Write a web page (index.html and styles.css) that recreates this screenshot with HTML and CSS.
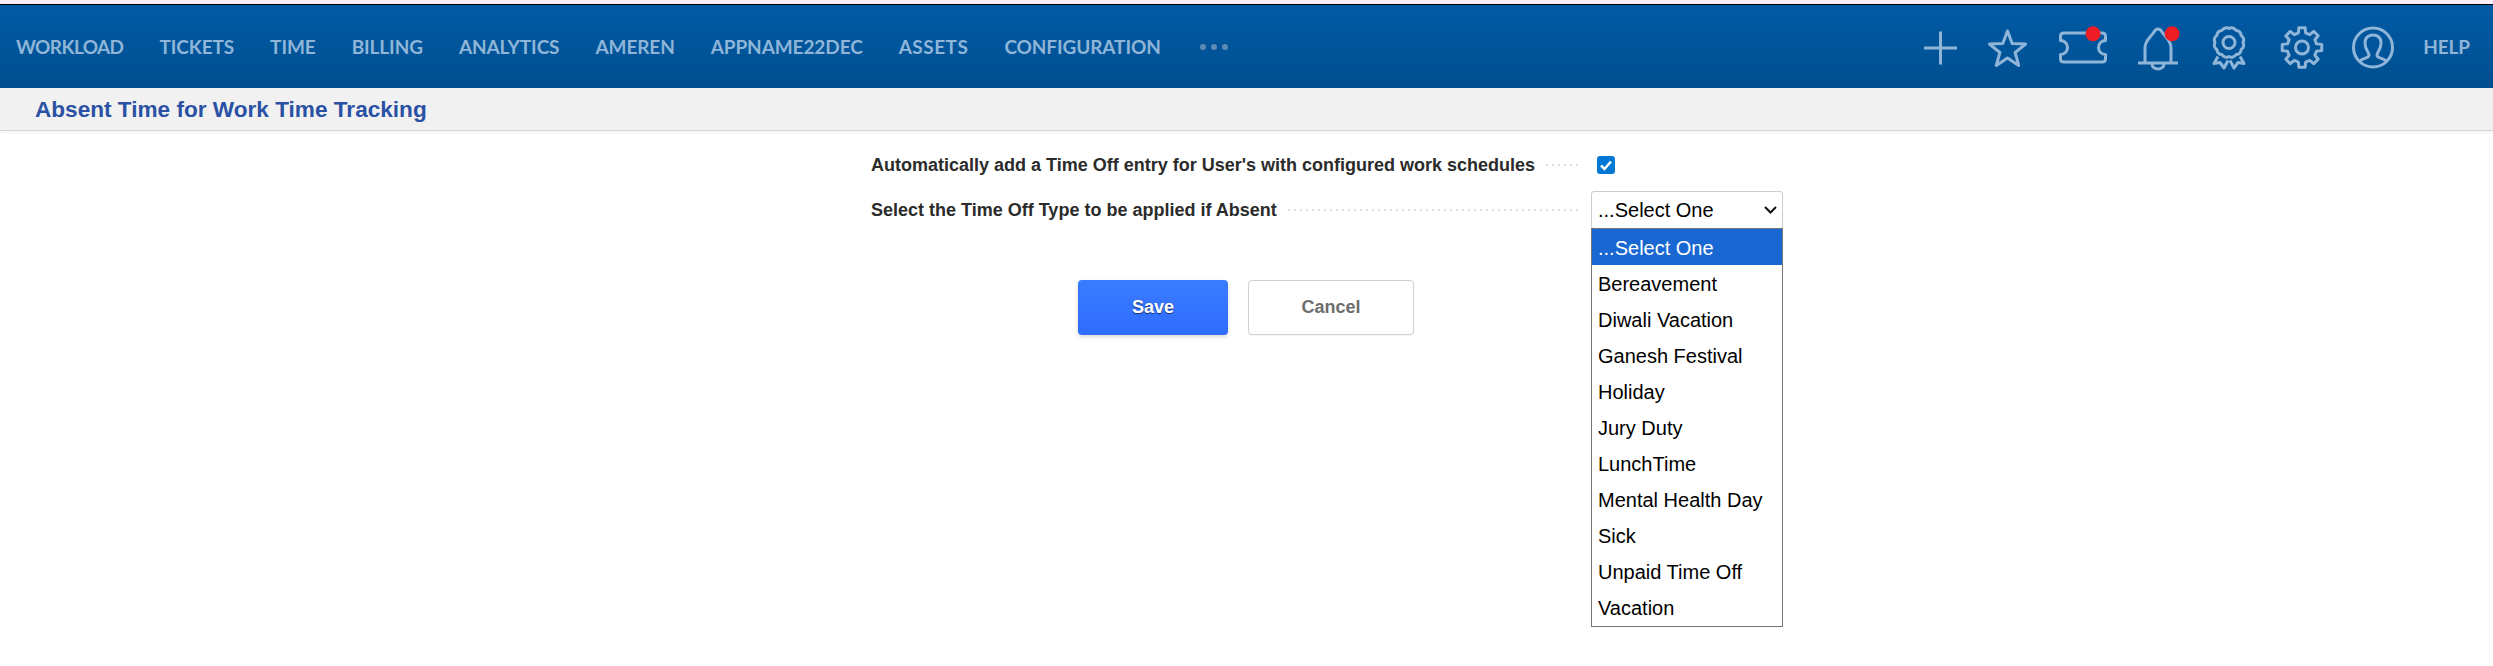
FILE: index.html
```html
<!DOCTYPE html>
<html lang="en">
<head>
  <meta charset="UTF-8" />
  <title>Absent Time for Work Time Tracking</title>
  <link rel="stylesheet" href="styles.css">
</head>
<body>

  <header class="topbar">
    <nav class="main-nav">
      <a href="#" class="nav-tight">WORKLOAD</a>
      <a href="#">TICKETS</a>
      <a href="#">TIME</a>
      <a href="#">BILLING</a>
      <a href="#">ANALYTICS</a>
      <a href="#">AMEREN</a>
      <a href="#">APPNAME22DEC</a>
      <a href="#" class="nav-wide">ASSETS</a>
      <a href="#">CONFIGURATION</a>
      <span class="more-dots"><i></i><i></i><i></i></span>
    </nav>

    <div class="tools">
      <!-- plus -->
      <svg class="icon icon-plus" viewBox="0 0 33 42"><path d="M16.5 5.5V38.5M0 22H33"/></svg>
      <!-- favourites -->
      <svg class="icon icon-star" viewBox="0 0 42 42"><path d="M20.5 5L25.2 17.5 38.6 18.1 28.1 26.5 31.7 39.4 20.5 32 9.3 39.4 12.9 26.5 2.4 18.1 15.8 17.5Z"/></svg>
      <!-- tickets -->
      <svg class="icon icon-ticket" viewBox="0 0 48 42">
        <path d="M5 7H43Q46.500 7 46.500 10V14.500a7 7 0 0 0 0 14V33Q46.500 36 43 36H5Q1.500 36 1.500 33V28.500a7 7 0 0 0 0-14V10Q1.500 7 5 7Z"/>
        <circle class="dot" cx="34" cy="7.800" r="7.500"/>
      </svg>
      <!-- notifications -->
      <svg class="icon icon-bell" viewBox="0 0 42 42">
        <path d="M8 36V22C8 14 13 12 17 6C19 2 23 2 25 6C29 12 34 14 34 22V36M1 37H41M15 38a6 5 0 0 0 12 0"/>
        <circle class="dot" cx="35" cy="7.800" r="7.500"/>
      </svg>
      <!-- awards -->
      <svg class="icon icon-award" viewBox="0 0 42 42">
        <path transform="translate(3 .5)" d="M17 2A5 5 0 0 1 24 3.900A5 5 0 0 1 29.100 9A5 5 0 0 1 31 16A5 5 0 0 1 29.100 23A5 5 0 0 1 24 28.100A5 5 0 0 1 17 30A5 5 0 0 1 10 28.100A5 5 0 0 1 4.900 23A5 5 0 0 1 3 16A5 5 0 0 1 4.900 9A5 5 0 0 1 10 3.900A5 5 0 0 1 17 2Z"/>
        <circle cx="20" cy="16.500" r="6"/>
        <path d="M9 30.500L5 37.500 11 36.500 15 42 19 34.500M21 34.500L25 42 29 36.500 35 37.500 31 30.500"/>
      </svg>
      <!-- settings -->
      <svg class="icon icon-gear" viewBox="0 0 42 42">
        <path transform="translate(21 21.500)" d="M-3.630-14.550L-3.130-19.750 3.130-19.750 3.630-14.550 7.720-12.850 11.750-16.180 16.180-11.750 12.850-7.720 14.550-3.630 19.750-3.130 19.750 3.130 14.550 3.630 12.850 7.720 16.180 11.750 11.750 16.180 7.720 12.850 3.630 14.550 3.130 19.750-3.130 19.750-3.630 14.550-7.720 12.850-11.750 16.180-16.180 11.750-12.850 7.720-14.550 3.630-19.750 3.130-19.750-3.130-14.550-3.630-12.850-7.720-16.180-11.750-11.750-16.180-7.720-12.850Z"/>
        <circle cx="21" cy="21.500" r="6.500"/>
      </svg>
      <!-- profile -->
      <svg class="icon icon-user" viewBox="0 0 42 42">
        <circle cx="20" cy="21.500" r="19.500"/>
        <path d="M6 36C10 31 16 33 16 29C16 26 12 24 12 17C12 11 16 9 20 9C24 9 28 11 28 17C28 24 24 26 24 29C24 33 30 31 34 36"/>
      </svg>
      <a href="#" class="help">HELP</a>
    </div>
  </header>

  <div class="page-title">
    <h1>Absent Time for Work Time Tracking</h1>
  </div>

  <form class="settings-form">
    <div class="form-row">
      <label>Automatically add a Time Off entry for User's with configured work schedules</label>
      <span class="leader"></span>
      <div class="control check-control">
        <span class="checkbox">
          <svg viewBox="0 0 18 18"><path d="M4 9.500L7.500 13 14 5.500"/></svg>
        </span>
      </div>
    </div>
    <div class="form-row">
      <label>Select the Time Off Type to be applied if Absent</label>
      <span class="leader"></span>
      <div class="control">
        <select class="type-select">
          <option>...Select One</option>
        </select>
        <svg class="chevron" viewBox="0 0 13 8"><path d="M1 1L6.500 6.500 12 1"/></svg>
        <!-- open dropdown list -->
        <ul class="type-list">
          <li class="selected">...Select One</li>
          <li>Bereavement</li>
          <li>Diwali Vacation</li>
          <li>Ganesh Festival</li>
          <li>Holiday</li>
          <li>Jury Duty</li>
          <li>LunchTime</li>
          <li>Mental Health Day</li>
          <li>Sick</li>
          <li>Unpaid Time Off</li>
          <li>Vacation</li>
        </ul>
      </div>
    </div>
  </form>

  <div class="buttons">
    <button type="button" class="btn btn-save">Save</button>
    <button type="button" class="btn btn-cancel">Cancel</button>
  </div>

</body>
</html>
```

FILE: styles.css
```css
html, body {
  height: 100%;
}

body {
  margin: 0;
  background-color: #fff;
  font-family: "Liberation Sans", Arial, sans-serif;
  overflow: hidden;
}

.topbar {
  display: flex;
  justify-content: space-between;
  align-items: center;
  height: 83px;
  padding: 0 23px 0 16px;
  background: linear-gradient(#005aa4, #004f90);
  border-top: 1px solid #000;
  box-shadow: 0 -4px 0 #fdeefc;
  margin-top: 4px;
}

.main-nav {
  display: flex;
  align-items: center;
  gap: 36px;
}

.main-nav a,
.help {
  color: #8fb5d8;
  font-family: Lato, sans-serif;
  font-size: 19px;
  font-weight: 700;
  letter-spacing: -0.1px;
  text-decoration: none;
}

.main-nav .nav-tight {
  letter-spacing: -0.6px;
}

.main-nav .nav-wide {
  letter-spacing: 0.5px;
}

.more-dots {
  display: flex;
  gap: 5px;
  margin-left: 3px;
}

.more-dots i {
  width: 6px;
  height: 6px;
  border-radius: 50%;
  background-color: #5e8ab6;
}

.tools {
  display: flex;
  align-items: center;
  gap: 30px;
}

.icon {
  height: 42px;
  overflow: visible;
  fill: none;
  stroke: #8fb5d8;
  stroke-width: 3;
  stroke-linejoin: round;
}

.icon .dot {
  fill: #ee1c25;
  stroke: none;
}

.icon-plus { width: 33px; }
.icon-star { width: 42px; }
.icon-ticket { width: 48px; }
.icon-bell { width: 42px; }
.icon-award { width: 42px; }
.icon-gear { width: 42px; }
.icon-user { width: 42px; }

.help {
  margin-left: -2px;
}

.page-title {
  height: 42px;
  padding-left: 35px;
  background-color: #f1f1f1;
  border-bottom: 1px solid #d5d5d5;
  box-shadow: 0 1px 3px rgba(0,0,0,0.08);
}

h1 {
  margin: 0;
  color: #2b51a5;
  font-size: 22.600px;
  line-height: 43px;
}

.settings-form {
  display: flex;
  flex-direction: column;
  width: 912px;
  margin: 15px 0 0 871px;
  gap: 7px;
}

.form-row {
  display: flex;
  align-items: center;
  height: 38px;
}

.form-row label {
  color: #2b2b2b;
  font-size: 18px;
  font-weight: 700;
}

.leader {
  flex: 1;
  height: 2px;
  margin: 0 11px 0 11px;
  background: repeating-linear-gradient(90deg, #ddd 0 2px, transparent 2px 6px);
}

.control {
  position: relative;
  width: 192px;
  flex: none;
}

.check-control {
  padding-left: 6px;
  box-sizing: border-box;
}

.checkbox {
  display: block;
  width: 18px;
  height: 18px;
  border-radius: 3px;
  background-color: #0078d4;
}

.checkbox svg {
  display: block;
  fill: none;
  stroke: #fff;
  stroke-width: 2.500;
}

.type-select {
  display: block;
  width: 100%;
  height: 38px;
  padding: 0 0 0 6px;
  appearance: none;
  background-color: #fff;
  border: 1px solid #ccc;
  border-radius: 3px;
  color: #000;
  font-family: "Liberation Sans", Arial, sans-serif;
  font-size: 20px;
}

.chevron {
  position: absolute;
  top: 15px;
  right: 6px;
  width: 13px;
  height: 8px;
  fill: none;
  stroke: #111;
  stroke-width: 2;
}

.type-list {
  position: absolute;
  z-index: 1;
  left: 0;
  right: 0;
  top: 37px;
  margin: 0;
  padding: 0 0 1px;
  list-style: none;
  background-color: #fff;
  border: 1px solid #767676;
}

.type-list li {
  height: 36px;
  padding-left: 6px;
  color: #000;
  font-size: 20px;
  line-height: 38px;
}

.type-list .selected {
  background-color: #1967d2;
  color: #fff;
}

.buttons {
  display: flex;
  justify-content: center;
  gap: 20px;
  margin-top: 51px;
  padding-right: 1px;
}

.btn {
  width: 150px;
  height: 55px;
  border-radius: 4px;
  font-family: "Liberation Sans", Arial, sans-serif;
  font-size: 18px;
  font-weight: 700;
}

.btn-save {
  background: linear-gradient(#3a7cff, #2f6cff);
  border: none;
  color: #fff;
  text-shadow: 0 1px 1px rgba(0,0,0,0.6);
  box-shadow: 0 2px 4px rgba(0,0,0,0.15);
}

.btn-cancel {
  width: 166px;
  background-color: #fff;
  border: 1px solid #d2d2d2;
  color: #6d6d6d;
  box-shadow: 0 1px 2px rgba(0,0,0,0.05);
}
```
